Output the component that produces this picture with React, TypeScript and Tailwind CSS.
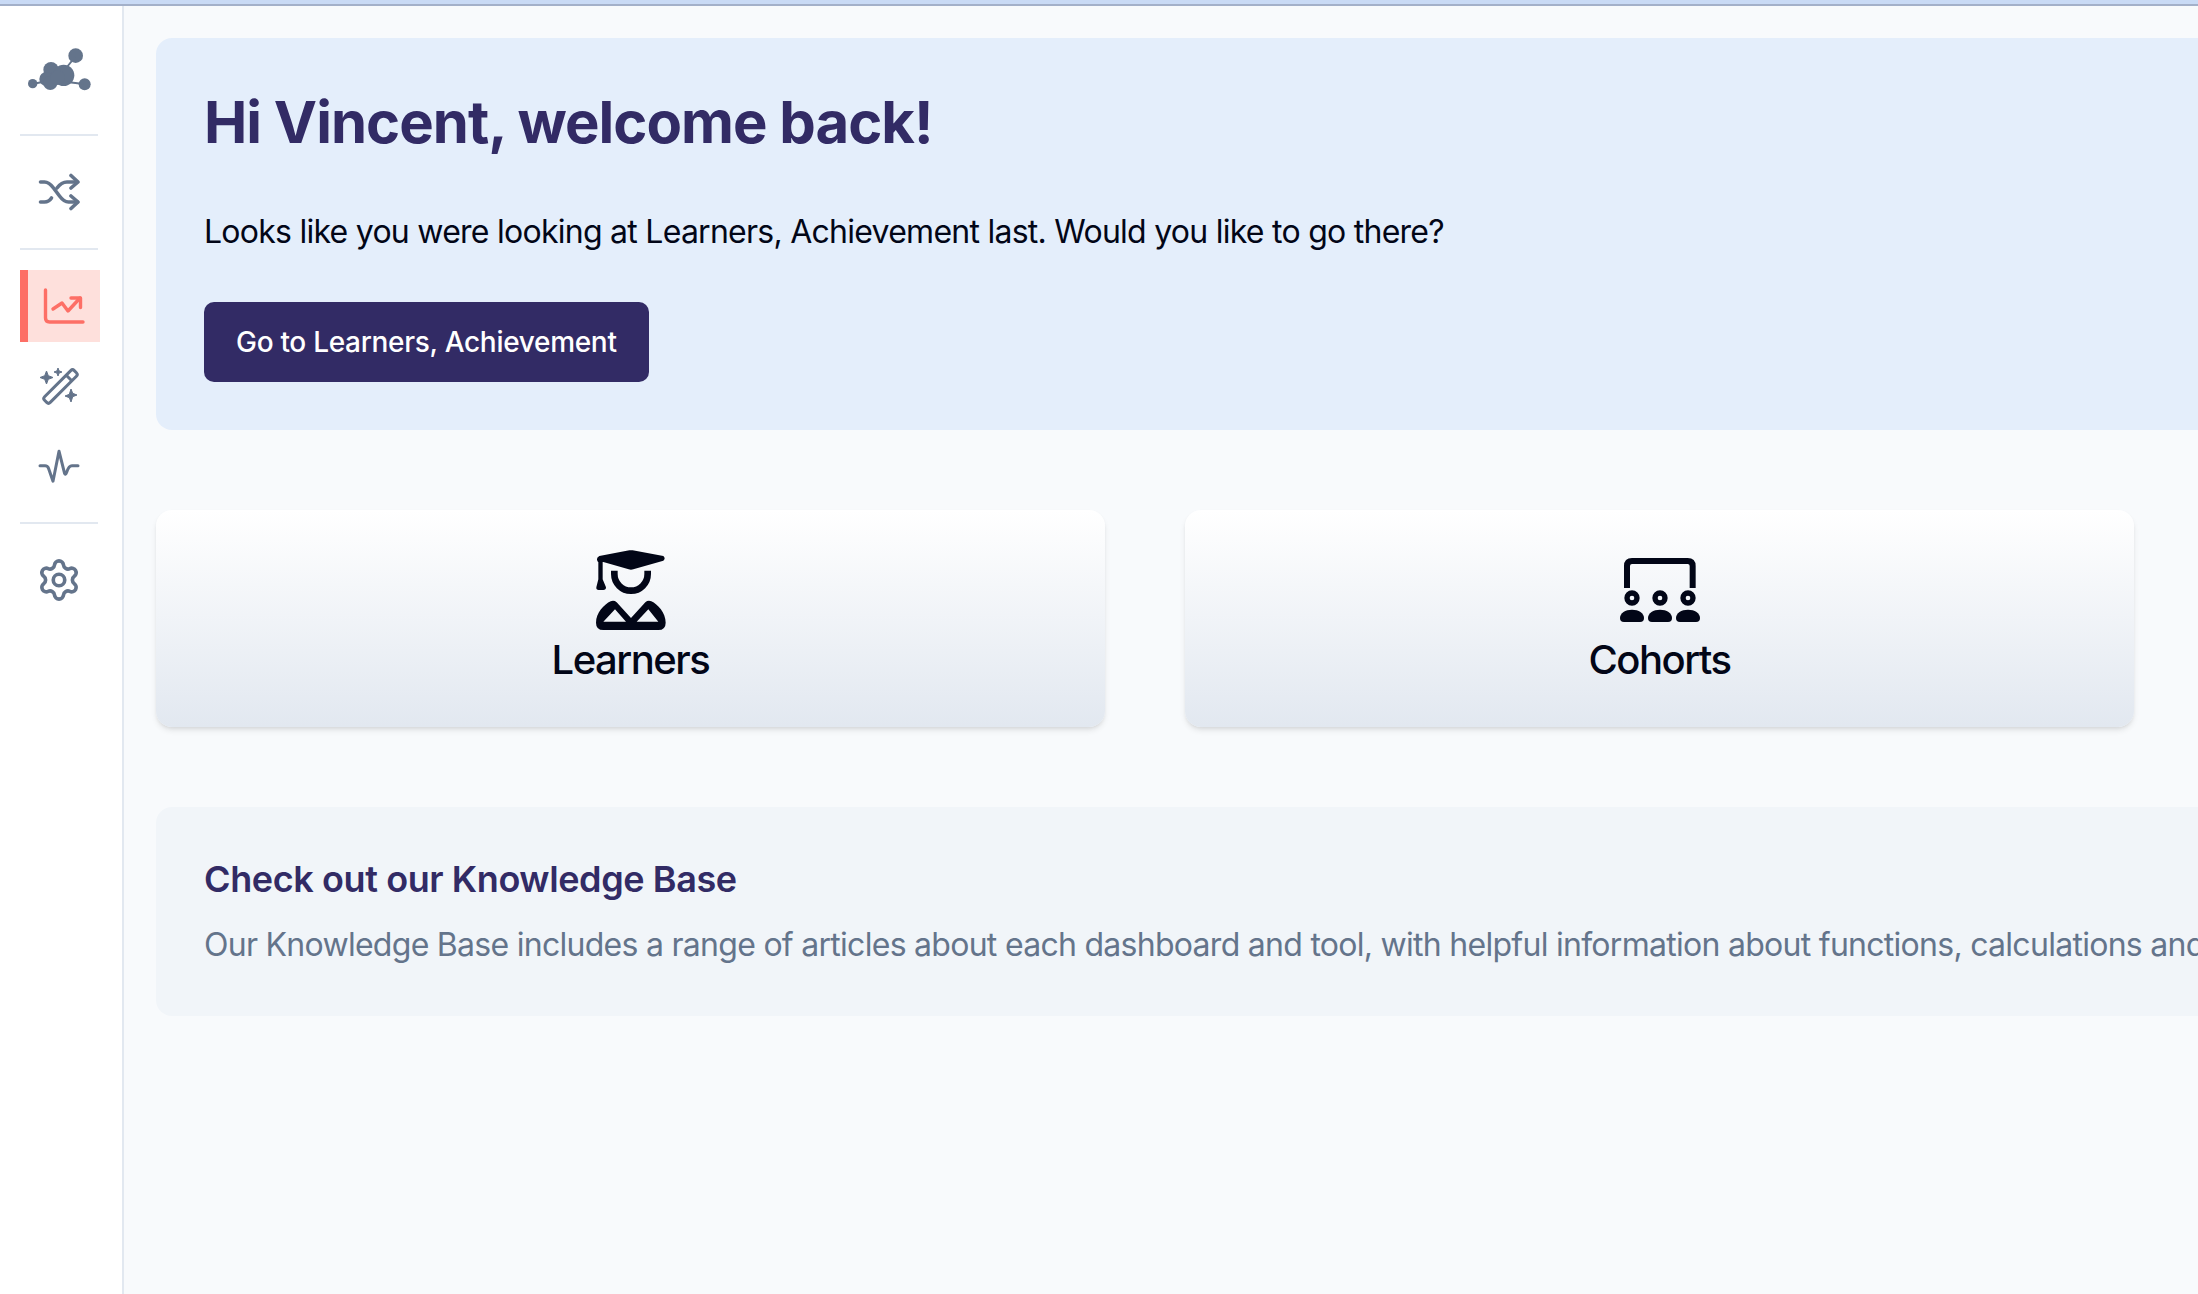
import { Settings } from 'lucide-react';
import type { ReactNode } from 'react';

function Logo() {
  return (
    <svg viewBox="80 140 195 132" className="h-[44px] w-[65px] text-[#64748b]" fill="currentColor">
      <circle cx="226" cy="166" r="22" />
      <circle cx="253" cy="252" r="18" />
      <circle cx="97" cy="250" r="14" />
      <circle cx="152" cy="208" r="23" />
      <circle cx="138" cy="236" r="21" />
      <circle cx="150" cy="248" r="21" />
      <circle cx="190" cy="225" r="32" />
      <circle cx="172" cy="232" r="22" />
      <path d="M200 200 224 170M200 245l50 6M100 250l30-6" stroke="currentColor" strokeWidth="6" />
    </svg>
  );
}

function ShuffleIcon() {
  return (
    <svg viewBox="38 172 42 40" className="h-10 w-[42px]" fill="none" stroke="currentColor" strokeWidth="3.600" strokeLinecap="round" strokeLinejoin="round">
      <path d="M40.500 182h4c4 0 6 2 9 6l6 8c3 4 5 6 9 6h9" />
      <path d="M40.500 202h4c3 0 5-1 7-4M57 188c3-4 6-6 10-6h10" />
      <path d="M71 175.500l7 6.500-7 6M71 196l7 6-7 6.500" />
    </svg>
  );
}

function ChartIcon() {
  return (
    <svg viewBox="42 286 44 38" className="h-[38px] w-11" fill="none" stroke="currentColor" strokeWidth="3.400" strokeLinecap="round" strokeLinejoin="round">
      <path d="M45.500 289v28c0 2.500 1.500 4 4 4H83" />
      <path d="M53 308l9-6 6 8 12-13" />
      <path d="M71 297h9.500v9.500" />
    </svg>
  );
}

function Wand() {
  return (
    <svg viewBox="38 367 40 38" className="h-[38px] w-10" fill="none" stroke="currentColor" strokeWidth="3" strokeLinejoin="round">
      <rect x="-4" y="-21" width="8" height="42" rx="2.500" transform="translate(59.500 386.500) rotate(45)" />
      <path d="M65 375l6 6" />
      <path
        fill="currentColor"
        stroke="currentColor"
        strokeWidth="1"
        d="M45.500 371l1.800 4.700 4.700 1.800-4.700 1.800-1.800 4.700-1.800-4.700-4.700-1.800 4.700-1.800zM57 368l1.100 2.900 2.900 1.100-2.900 1.100L57 376l-1.100-2.900-2.900-1.100 2.900-1.100zM70 389l1.700 4.300 4.300 1.700-4.300 1.700L70 402l-1.700-4.300-4.300-1.700 4.300-1.700z"
      />
    </svg>
  );
}

function Pulse() {
  return (
    <svg viewBox="38 449 42 34" className="h-[34px] w-[42px]" fill="none" stroke="currentColor" strokeWidth="3" strokeLinecap="round" strokeLinejoin="round">
      <path d="M40 465.700h5c2 0 3 1 3.500 2.500l4.500 13 6-30 5.500 22c.5 1.500 1.500 1.500 2-.5 1-3 2-7 5.500-7H78" />
    </svg>
  );
}

function LearnerIcon() {
  return (
    <svg viewBox="0 0 210 240" className="h-[80px] w-[70px]" fill="#020617">
      <path d="M10 18 100 1q5-1 10 0l92 17q8 7 0 14l-90 26q-7 2-14 0L22 36H6q-8-11 4-18Z" />
      <path d="M7 30h13v58l10 24q0 8-8 8H8q-8 0-7-8L7 88Z" />
      <path d="M55 62v10a50 50 0 0 0 100 0V62" fill="none" stroke="#020617" strokeWidth="20" />
      <path
        fillRule="evenodd"
        d="M0 218c0-30 25-55 44-64q10-4 18 3l43 47 43-47q8-7 18-3c19 9 43 34 43 64q0 22-22 22H22q-22 0-22-22Zm22-3h68L57 178Zm100 0h65l-30-37Z"
      />
    </svg>
  );
}

function Seat({ x }: { x: number }) {
  return (
    <g>
      <path fillRule="evenodd" d={`M${x + 36} 97a23 23 0 1 1 0 46 23 23 0 0 1 0-46Zm0 16a7 7 0 1 0 0 14 7 7 0 0 0 0-14Z`} />
      <path d={`M${x} 180c0-15 16-25 36-25s36 10 36 25q0 12-12 12H${x + 12}q-12 0-12-12Z`} />
    </g>
  );
}

function CohortIcon() {
  return (
    <svg viewBox="0 0 240 192" className="h-[64px] w-[80px]" fill="#020617">
      <path d="M21 90V24q0-15 15-15h167q15 0 15 15v66" fill="none" stroke="#020617" strokeWidth="18" />
      <Seat x={0} />
      <Seat x={84} />
      <Seat x={168} />
    </svg>
  );
}

function Card({ label, icon }: { label: string; icon: ReactNode }) {
  return (
    <div className="flex h-[217px] flex-col items-center rounded-2xl bg-gradient-to-b from-white to-[#e2e8f0] pt-10 shadow-md">
      <div className="flex h-[80px] items-center justify-center">{icon}</div>
      <div className="mt-[6px] text-[40px] font-medium leading-[48px] tracking-[-1.5px] text-[#020617]">{label}</div>
    </div>
  );
}

export default function App() {
  return (
    <div className="flex h-[1294px] w-[2198px] flex-col overflow-hidden bg-[#f8fafc] font-['Inter',sans-serif]">
      <div className="h-[6px] shrink-0 border-b-2 border-[#a3b0c9] bg-[#c9daf5]" />
      <div className="flex min-h-0 flex-1">
        <aside className="flex w-[124px] shrink-0 flex-col items-start border-r-2 border-[#e2e8f0] bg-white pl-5 text-[#64748b]">
          <div className="flex h-[128px] w-[78px] items-center justify-center pb-[2px]">
            <Logo />
          </div>
          <div className="h-0.5 w-[78px] bg-[#e2e8f0]" />
          <div className="flex h-[112px] w-[78px] items-center justify-center">
            <ShuffleIcon />
          </div>
          <div className="h-0.5 w-[78px] bg-[#e2e8f0]" />
          <div className="mt-5 flex h-[72px] w-20 items-center justify-center border-l-8 border-[#fd6f66] bg-[#fee0dc] text-[#fd6f66]">
            <ChartIcon />
          </div>
          <div className="mt-2 flex h-[72px] w-[78px] items-center justify-center">
            <Wand />
          </div>
          <div className="mt-2 flex h-[72px] w-[78px] items-center justify-center">
            <Pulse />
          </div>
          <div className="mt-5 h-0.5 w-[78px] bg-[#e2e8f0]" />
          <div className="mt-[18px] flex h-[76px] w-[78px] items-center justify-center">
            <Settings size={46} strokeWidth={1.9} />
          </div>
        </aside>

        <main className="min-w-0 flex-1 pl-8 pt-8">
          <section className="h-[392px] w-[2200px] rounded-l-2xl bg-[#e4eefb] pl-12 pt-[50px]">
            <h1 className="text-[58px] font-bold leading-[68px] tracking-[-0.98px] text-[#322b65]">
              Hi Vincent, welcome back!
            </h1>
            <p className="mt-[52px] text-[32px] leading-[48px] tracking-[-0.74px] text-[#020617]">
              Looks like you were looking at Learners, Achievement last. Would you like to go there?
            </p>
            <button className="mt-[46px] h-20 rounded-[10px] bg-[#322b65] px-8 text-[28px] font-medium tracking-[-0.3px] text-white">
              Go to Learners, Achievement
            </button>
          </section>

          <section className="mt-20 grid w-[1978px] grid-cols-2 gap-20">
            <Card label="Learners" icon={<LearnerIcon />} />
            <Card label="Cohorts" icon={<CohortIcon />} />
          </section>

          <section className="mt-20 h-[209px] w-[2200px] overflow-hidden rounded-l-2xl bg-[#f1f5f9] pl-12 pt-[48px]">
            <h2 className="text-[36px] font-semibold leading-[48px] tracking-[-0.4px] text-[#322b65]">
              Check out our Knowledge Base
            </h2>
            <p className="mt-[18px] whitespace-nowrap text-[32px] leading-[48px] tracking-[-0.72px] text-[#64748b]">
              Our Knowledge Base includes a range of articles about each dashboard and tool, with helpful information about functions, calculations and more.
            </p>
          </section>
        </main>
      </div>
    </div>
  );
}
